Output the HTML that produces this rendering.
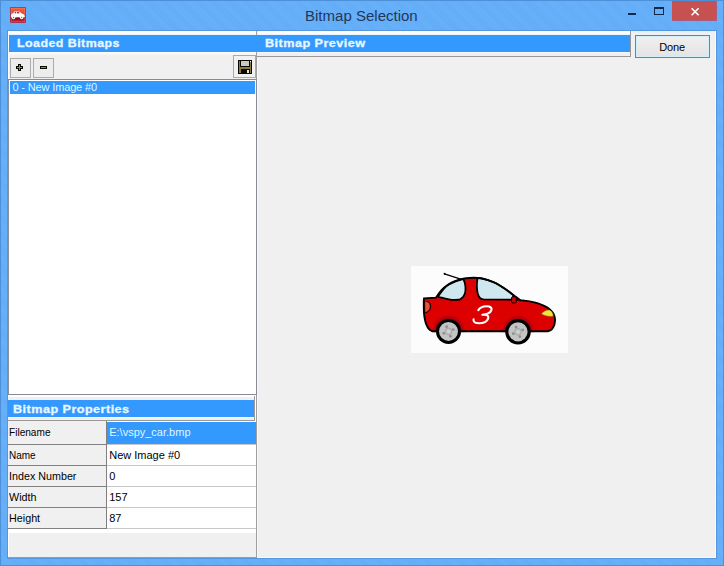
<!DOCTYPE html>
<html><head><meta charset="utf-8">
<style>
html,body{margin:0;padding:0;}
body{width:724px;height:566px;overflow:hidden;background:#65aef8 repeating-linear-gradient(45deg,#62acf7 0,#62acf7 1px,#69b2fa 1px,#69b2fa 2px);position:relative;font-family:"Liberation Sans",sans-serif;font-size:11px;color:#000;}
div,span,svg{position:absolute;box-sizing:border-box;}
.t{white-space:nowrap;line-height:1;}
.hdr{background:#3399ff;}
.hdr .t{color:#e6f7ff;font-weight:bold;font-size:11px;letter-spacing:0.4px;transform-origin:0 0;-webkit-text-stroke:0.3px #e6f7ff;}
.btn{background:#ededed;border:1px solid #ababab;}
.lbl{background:#f0f0f0;}
</style></head><body>
<!-- window frame -->
<div id="frame" style="left:0;top:0;width:724px;height:566px;border:1px solid #4d90d8;"></div>
<div style="left:7px;top:30px;width:710px;height:529px;border:1px solid #5497df;"></div>
<!-- title icon -->
<svg id="icon" style="left:10px;top:7px" width="16" height="16" viewBox="0 0 16 16">
<defs><linearGradient id="ig" x1="0" y1="0" x2="0" y2="1"><stop offset="0" stop-color="#f4603e"/><stop offset="0.6" stop-color="#e23a30"/><stop offset="0.66" stop-color="#a80e20"/><stop offset="1" stop-color="#cc2434"/></linearGradient></defs>
<rect x="0" y="0" width="16" height="16" rx="1.2" fill="#8a2a50"/>
<rect x="0.8" y="0.8" width="14.4" height="14.4" fill="url(#ig)"/>
<rect x="1.1" y="1.1" width="13.8" height="13.8" fill="none" stroke="#ffb0a0" stroke-opacity="0.45" stroke-width="0.7"/>
<rect x="3.5" y="11.2" width="8.5" height="1.2" fill="#7c0818"/>
<path d="M1 8.2 Q1 6.3 3.2 6.2 L4.4 4.4 H9.4 L11.4 6.3 Q14.2 6.8 14.7 8.8 L14.7 10.2 H1 Z" fill="#fff"/>
<circle cx="3.6" cy="10.4" r="1.8" fill="#fff"/><circle cx="11.6" cy="10.4" r="1.8" fill="#fff"/>
<circle cx="3.6" cy="10.5" r="0.7" fill="#c8506a"/><circle cx="11.6" cy="10.5" r="0.7" fill="#c8506a"/>
<rect x="4.7" y="5.1" width="1.5" height="1.2" fill="#8a1420"/><rect x="7" y="5.1" width="2.2" height="1.2" fill="#8a1420"/>
</svg>
<!-- title -->
<span class="t" id="title" style="left:305.2px;top:7.5px;font-size:15.5px;transform-origin:0 0;transform:scaleX(0.969);color:#22375a;">Bitmap Selection</span>
<!-- window controls -->
<div style="left:628px;top:13px;width:8px;height:2px;background:#12294a;"></div>
<div style="left:654px;top:7px;width:10px;height:8px;border:1px solid #12294a;border-top-width:2px;"></div>
<div style="left:672px;top:1px;width:45px;height:20px;background:#c75050;border-right:1px solid #a8607c;border-bottom:1px solid #a8607c;"></div>
<svg style="left:690px;top:7px" width="10" height="10" viewBox="0 0 10 10"><path d="M1.6 1.2 L8.6 8.2 M8.6 1.2 L1.6 8.2" stroke="#fff" stroke-width="1.6" fill="none"/></svg>

<!-- client -->
<div id="client" style="left:8px;top:31px;width:708px;height:527px;background:#f0f0f0;"></div>

<!-- left header panel -->
<div style="left:8px;top:31px;width:248px;height:4px;background:linear-gradient(#fff 50%,#e2f2ff);"></div>
<div class="hdr" style="left:9px;top:35px;width:247px;height:17px;"><span class="t" id="h1" style="left:8.3px;top:3px;transform:scaleX(1.129);">Loaded Bitmaps</span></div>
<div style="left:8px;top:52px;width:248px;height:3px;background:linear-gradient(#fdfdfd,#f4f4f4);"></div>
<div style="left:8px;top:31px;width:1px;height:527px;background:#fff;"></div>
<!-- divider -->
<div style="left:256px;top:31px;width:1px;height:4px;background:#a0a0a0;"></div>
<div style="left:256px;top:52px;width:1px;height:506px;background:#a0a0a0;"></div>
<div style="left:257px;top:31px;width:1px;height:4px;background:#fff;"></div>
<div style="left:257px;top:57px;width:1px;height:501px;background:#f7f7f7;"></div>

<!-- right header panel -->
<div style="left:257px;top:31px;width:374px;height:26px;background:#f0f0f0;border-right:1px solid #989898;border-bottom:1px solid #989898;"></div>
<div style="left:258px;top:31px;width:372px;height:4px;background:linear-gradient(#fff 50%,#e2f2ff);"></div>
<div class="hdr" style="left:256px;top:35px;width:374px;height:17px;"></div>
<div class="hdr" style="left:258px;top:35px;width:372px;height:17px;background:none;"><span class="t" id="h2" style="left:7.4px;top:3px;transform:scaleX(1.149);">Bitmap Preview</span></div>

<div style="left:257px;top:52px;width:373px;height:1px;background:#f4faff;"></div>
<!-- Done button -->
<div style="left:631px;top:31px;width:85px;height:3px;background:linear-gradient(#e0effb,#eef2f5);"></div>
<div style="left:635px;top:35px;width:75px;height:23px;border:1px solid #3b8de2;background:#d4effc;"></div>
<div style="left:637px;top:37px;width:71px;height:19px;background:linear-gradient(#efefef,#e4e4e4);"></div>
<span class="t" id="done" style="left:659.2px;top:42px;font-size:11px;letter-spacing:-0.1px;">Done</span>

<!-- toolbar buttons -->
<div class="btn" style="left:10px;top:58px;width:21px;height:20px;"></div>
<div class="btn" style="left:33px;top:58px;width:21px;height:20px;"></div>
<div class="btn" style="left:233px;top:55px;width:23px;height:23px;background:#f1f1f1;"></div>
<svg style="left:16px;top:64px" width="7" height="7" viewBox="0 0 7 7" shape-rendering="crispEdges"><rect x="2" y="0" width="3" height="7" fill="#0c0a00"/><rect x="0" y="2" width="7" height="3" fill="#0c0a00"/><rect x="3" y="1" width="1" height="5" fill="#a08c34"/><rect x="1" y="3" width="5" height="1" fill="#a08c34"/></svg>
<svg style="left:40px;top:66px" width="7" height="3" viewBox="0 0 7 3" shape-rendering="crispEdges"><rect x="0" y="0" width="7" height="3" fill="#0c0a00"/><rect x="1" y="1" width="5" height="1" fill="#a08c34"/></svg>
<!-- floppy -->
<svg style="left:238px;top:60px" width="14" height="14" viewBox="0 0 14 14" shape-rendering="crispEdges">
<rect x="0" y="0" width="14" height="14" fill="#0a0800"/>
<rect x="1" y="1" width="12" height="12" fill="#8c7c36"/>
<rect x="2" y="0" width="10" height="7" fill="#0a0800"/>
<rect x="3" y="1" width="8" height="5" fill="#c9c9c9"/>
<rect x="3" y="9" width="9" height="5" fill="#0a0800"/>
<rect x="9" y="10" width="2" height="3" fill="#e4e4e4"/>
<rect x="12" y="1" width="1" height="1" fill="#fff"/>
</svg>

<!-- listbox -->
<div style="left:8px;top:79px;width:249px;height:316px;background:#fff;border:1px solid #868b93;border-left-color:#8792a0;"></div>
<div class="hdr" style="left:10px;top:81px;width:245px;height:13px;"></div>
<span class="t" id="li" style="left:12.5px;top:82px;letter-spacing:-0.15px;color:#dff6ff;">0 - New Image #0</span>

<!-- properties header -->
<div style="left:8px;top:395px;width:248px;height:26px;background:#fff;"></div>
<div style="left:8px;top:397px;width:246px;height:3px;background:#f0f0f0;"></div>
<div class="hdr" style="left:8px;top:400px;width:246px;height:17px;"><span class="t" id="h3" style="left:5.4px;top:3.5px;transform:scaleX(1.148);">Bitmap Properties</span></div>
<div style="left:254px;top:396px;width:1px;height:25px;background:#9a9a9a;"></div>
<div style="left:8px;top:418px;width:246px;height:2px;background:#f0f0f0;"></div>

<!-- grid -->
<div style="left:8px;top:421px;width:248px;height:112px;background:#fff;"></div>
<div style="left:8px;top:420px;width:247px;height:1px;background:#9a9a9a;"></div>
<div class="lbl" style="left:8px;top:421px;width:98px;height:107px;"></div>
<div style="left:106px;top:421px;width:1px;height:108px;background:#808080;"></div>
<div class="hdr" style="left:107px;top:422px;width:149px;height:22px;"></div>
<div style="left:8px;top:444px;width:98px;height:1px;background:#808080;"></div>
<div style="left:8px;top:465px;width:98px;height:1px;background:#808080;"></div>
<div style="left:8px;top:486px;width:98px;height:1px;background:#808080;"></div>
<div style="left:8px;top:507px;width:98px;height:1px;background:#808080;"></div>
<div style="left:8px;top:528px;width:99px;height:1px;background:#808080;"></div>
<div style="left:107px;top:444px;width:149px;height:1px;background:#c8c8c8;"></div>
<div style="left:107px;top:465px;width:149px;height:1px;background:#c8c8c8;"></div>
<div style="left:107px;top:486px;width:149px;height:1px;background:#c8c8c8;"></div>
<div style="left:107px;top:507px;width:149px;height:1px;background:#c8c8c8;"></div>
<div style="left:107px;top:528px;width:149px;height:1px;background:#c8c8c8;"></div>
<span class="t" style="left:9.2px;top:427px;transform-origin:0 0;transform:scaleX(0.917);" id="l0">Filename</span>
<span class="t" style="left:9.2px;top:450px;transform-origin:0 0;transform:scaleX(0.907);" id="l1">Name</span>
<span class="t" style="left:9.2px;top:471px;transform-origin:0 0;transform:scaleX(0.976);" id="l2">Index Number</span>
<span class="t" style="left:9.2px;top:492px;transform-origin:0 0;transform:scaleX(0.978);" id="l3">Width</span>
<span class="t" style="left:9.2px;top:513px;transform-origin:0 0;transform:scaleX(0.978);" id="l4">Height</span>
<span class="t" style="left:109.2px;top:427px;color:#dff6ff;" id="v0">E:\vspy_car.bmp</span>
<span class="t" style="left:109.2px;top:450px;" id="v1">New Image #0</span>
<span class="t" style="left:109.2px;top:471px;" id="v2">0</span>
<span class="t" style="left:109.2px;top:492px;" id="v3">157</span>
<span class="t" style="left:109.2px;top:513px;" id="v4">87</span>

<div style="left:8px;top:557px;width:249px;height:1px;background:#9c9c9c;"></div>
<div style="left:257px;top:557px;width:459px;height:1px;background:#f6fbff;"></div>
<div style="left:715px;top:31px;width:1px;height:527px;background:#f6fbff;"></div>
<!-- car image -->
<div style="left:411px;top:266px;width:157px;height:87px;background:#fcfcfc;"></div>
<svg id="car" style="left:411px;top:266px" width="157" height="87" viewBox="0 0 157 87">
<path d="M33.4 7.8 L50.5 13.4" stroke="#000" stroke-width="1.3" stroke-linecap="round" fill="none"/>
<circle cx="33.6" cy="7.8" r="1" fill="#000"/>
<path d="M12.9 32.4 L25 31.6 C25.58 30.75 27.17 28.13 28.50 26.50 C29.83 24.87 31.42 23.22 33.00 21.80 C34.58 20.38 36.17 19.10 38.00 18.00 C39.83 16.90 42.08 15.98 44.00 15.20 C45.92 14.42 47.67 13.80 49.50 13.30 C51.33 12.80 52.75 12.47 55.00 12.20 C57.25 11.93 60.50 11.68 63.00 11.70 C65.50 11.72 67.67 11.90 70.00 12.30 C72.33 12.70 74.92 13.45 77.00 14.10 C79.08 14.75 80.67 15.38 82.50 16.20 C84.33 17.02 86.17 17.95 88.00 19.00 C89.83 20.05 91.65 21.25 93.50 22.50 C95.35 23.75 97.27 25.15 99.10 26.50 C100.93 27.85 102.77 29.32 104.50 30.60 C106.23 31.88 108.67 33.60 109.50 34.20 C110.42 34.32 113.08 34.62 115.00 34.90 C116.92 35.18 119.00 35.48 121.00 35.90 C123.00 36.32 125.17 36.83 127.00 37.40 C128.83 37.97 130.50 38.63 132.00 39.30 C133.50 39.97 134.83 40.68 136.00 41.40 C137.17 42.12 138.00 42.67 139.00 43.60 C140.00 44.53 141.18 45.60 142.00 47.00 C142.82 48.40 143.67 50.08 143.90 52.00 C144.13 53.92 143.88 56.67 143.40 58.50 C142.92 60.33 141.98 61.92 141.00 63.00 C140.02 64.08 138.67 64.62 137.50 65.00 C136.33 65.38 134.58 65.25 134.00 65.30 L21.3 65.2 C20.75 64.87 18.98 64.28 18.00 63.20 C17.02 62.12 16.10 60.40 15.40 58.70 C14.70 57.00 14.20 54.95 13.80 53.00 C13.40 51.05 13.17 49.17 13.00 47.00 C12.83 44.83 12.82 42.43 12.80 40.00 C12.78 37.57 12.88 33.67 12.90 32.40 Z" fill="#dc0000"/>
<defs><radialGradient id="ag"><stop offset="0.74" stop-color="#a0000c"/><stop offset="0.86" stop-color="#b80010"/><stop offset="1" stop-color="#dc0000"/></radialGradient></defs>
<circle cx="37.5" cy="65.4" r="16.8" fill="url(#ag)"/>
<circle cx="107" cy="65.8" r="16.8" fill="url(#ag)"/>
<rect x="18" y="66.1" width="122" height="19" fill="#fcfcfc"/>
<path d="M27.20 30.80 C27.47 30.33 27.83 29.37 28.80 28.00 C29.77 26.63 31.47 24.17 33.00 22.60 C34.53 21.03 36.17 19.77 38.00 18.60 C39.83 17.43 42.08 16.40 44.00 15.60 C45.92 14.80 48.10 14.22 49.50 13.80 C50.90 13.38 51.92 13.22 52.40 13.10 C52.63 13.75 53.45 15.52 53.80 17.00 C54.15 18.48 54.47 20.33 54.50 22.00 C54.53 23.67 54.42 25.50 54.00 27.00 C53.58 28.50 52.90 29.88 52.00 31.00 C51.10 32.12 49.17 33.25 48.60 33.70 C47.67 33.73 44.77 33.97 43.00 33.90 C41.23 33.83 39.83 33.62 38.00 33.30 C36.17 32.98 33.80 32.42 32.00 32.00 C30.20 31.58 28.00 31.00 27.20 30.80 Z" fill="#cfe7ef" stroke="#000" stroke-width="1.8" stroke-linejoin="round"/>
<path d="M66.60 12.20 C67.17 12.22 68.27 11.98 70.00 12.30 C71.73 12.62 74.92 13.45 77.00 14.10 C79.08 14.75 80.67 15.38 82.50 16.20 C84.33 17.02 86.17 17.95 88.00 19.00 C89.83 20.05 91.65 21.25 93.50 22.50 C95.35 23.75 97.60 25.38 99.10 26.50 C100.60 27.62 101.93 28.75 102.50 29.20 L101.2 33.7 L72.6 33.4 C72.10 33.27 70.43 33.17 69.60 32.60 C68.77 32.03 68.13 31.10 67.60 30.00 C67.07 28.90 66.68 27.50 66.40 26.00 C66.12 24.50 65.97 22.58 65.90 21.00 C65.83 19.42 65.88 17.97 66.00 16.50 C66.12 15.03 66.50 12.92 66.60 12.20 Z" fill="#cfe7ef" stroke="#000" stroke-width="1.8" stroke-linejoin="round"/>
<path d="M103.5 30.2 L110.2 34.6 L104.5 34.6 Z" fill="#000"/>
<path d="M12.9 32.4 L25 31.6 C25.58 30.75 27.17 28.13 28.50 26.50 C29.83 24.87 31.42 23.22 33.00 21.80 C34.58 20.38 36.17 19.10 38.00 18.00 C39.83 16.90 42.08 15.98 44.00 15.20 C45.92 14.42 47.67 13.80 49.50 13.30 C51.33 12.80 52.75 12.47 55.00 12.20 C57.25 11.93 60.50 11.68 63.00 11.70 C65.50 11.72 67.67 11.90 70.00 12.30 C72.33 12.70 74.92 13.45 77.00 14.10 C79.08 14.75 80.67 15.38 82.50 16.20 C84.33 17.02 86.17 17.95 88.00 19.00 C89.83 20.05 91.65 21.25 93.50 22.50 C95.35 23.75 97.27 25.15 99.10 26.50 C100.93 27.85 102.77 29.32 104.50 30.60 C106.23 31.88 108.67 33.60 109.50 34.20 C110.42 34.32 113.08 34.62 115.00 34.90 C116.92 35.18 119.00 35.48 121.00 35.90 C123.00 36.32 125.17 36.83 127.00 37.40 C128.83 37.97 130.50 38.63 132.00 39.30 C133.50 39.97 134.83 40.68 136.00 41.40 C137.17 42.12 138.00 42.67 139.00 43.60 C140.00 44.53 141.18 45.60 142.00 47.00 C142.82 48.40 143.67 50.08 143.90 52.00 C144.13 53.92 143.88 56.67 143.40 58.50 C142.92 60.33 141.98 61.92 141.00 63.00 C140.02 64.08 138.67 64.62 137.50 65.00 C136.33 65.38 134.58 65.25 134.00 65.30 L21.3 65.2 C20.75 64.87 18.98 64.28 18.00 63.20 C17.02 62.12 16.10 60.40 15.40 58.70 C14.70 57.00 14.20 54.95 13.80 53.00 C13.40 51.05 13.17 49.17 13.00 47.00 C12.83 44.83 12.82 42.43 12.80 40.00 C12.78 37.57 12.88 33.67 12.90 32.40 Z" fill="none" stroke="#000" stroke-width="1.9" stroke-linejoin="round"/>
<rect x="100.6" y="30.8" width="4.6" height="6.1" rx="1.2" fill="#dc0000" stroke="#000" stroke-width="1"/>
<path d="M14.2 36.3 L16.2 36 C18 36.3 18.8 38.5 18.6 41 C18.2 43.8 16.4 45.6 14.5 46.2 Z" fill="#e2573c"/>
<path d="M15.8 35.4 C18.8 35.8 19.9 38.4 19.6 41.2 C19.2 44.2 17 46.2 14.2 46.8" fill="none" stroke="#000" stroke-width="1"/>
<path d="M130.4 47.8 C133 44.5 136.5 43.4 139 44.2 C141.3 45.5 142.4 48 142.2 50.2 C138 50.8 133.5 50 130.4 47.8 Z" fill="#f2e23c" stroke="#7a5a00" stroke-width="0.5"/>
<path d="M67.3 44.2 C68.8 41.6 72 40.4 75.5 40.3 C79.5 40.2 81.1 42 80.4 44.2 C79.5 46.6 76 48.4 71.3 48.7 M73.5 48.6 C76.6 48.7 77.9 50.3 77.1 52.6 C76 55.6 72 57.3 68 57.3 C64 57.3 62 55.9 62.6 53.3" fill="none" stroke="#fff" stroke-width="2.1" stroke-linecap="round"/>
<g><circle cx="37.5" cy="65.4" r="12.5" fill="#000"/><circle cx="37.5" cy="65.4" r="9.5" fill="#c4c4c4"/><circle cx="37.5" cy="65.4" r="3.3" fill="none" stroke="#a6a6a6" stroke-width="1"/><circle cx="35.59" cy="60.67" r="1.35" fill="#8e8e8e"/><circle cx="42.23" cy="63.49" r="1.35" fill="#8e8e8e"/><circle cx="39.41" cy="70.13" r="1.35" fill="#8e8e8e"/><circle cx="32.77" cy="67.31" r="1.35" fill="#8e8e8e"/><circle cx="37.5" cy="65.4" r="1.6" fill="#d2d2d2"/></g>
<g><circle cx="107" cy="65.8" r="12.8" fill="#000"/><circle cx="107" cy="65.8" r="9.6" fill="#c4c4c4"/><circle cx="107" cy="65.8" r="3.3" fill="none" stroke="#a6a6a6" stroke-width="1"/><circle cx="105.09" cy="61.07" r="1.35" fill="#8e8e8e"/><circle cx="111.73" cy="63.89" r="1.35" fill="#8e8e8e"/><circle cx="108.91" cy="70.53" r="1.35" fill="#8e8e8e"/><circle cx="102.27" cy="67.71" r="1.35" fill="#8e8e8e"/><circle cx="107" cy="65.8" r="1.6" fill="#d2d2d2"/></g>
</svg>
</body></html>
